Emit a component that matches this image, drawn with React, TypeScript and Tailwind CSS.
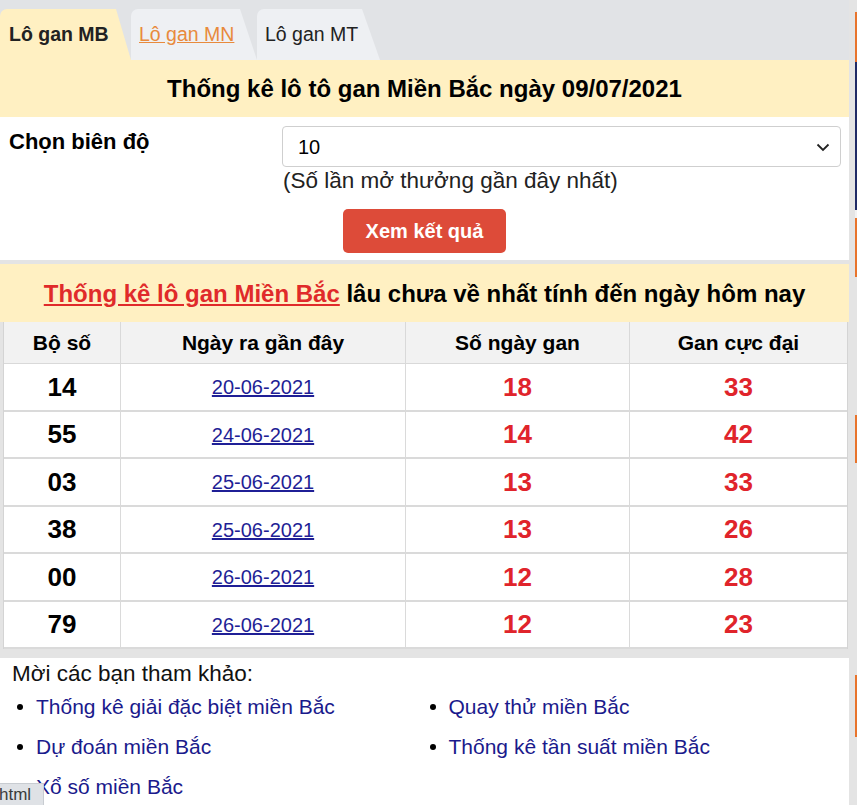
import React from "react";

const rows = [
  { bo: "14", date: "20-06-2021", gan: "18", max: "33" },
  { bo: "55", date: "24-06-2021", gan: "14", max: "42" },
  { bo: "03", date: "25-06-2021", gan: "13", max: "33" },
  { bo: "38", date: "25-06-2021", gan: "13", max: "26" },
  { bo: "00", date: "26-06-2021", gan: "12", max: "28" },
  { bo: "79", date: "26-06-2021", gan: "12", max: "23" },
];

const links = [
  "Thống kê giải đặc biệt miền Bắc",
  "Quay thử miền Bắc",
  "Dự đoán miền Bắc",
  "Thống kê tần suất miền Bắc",
  "Xổ số miền Bắc",
];

export default function App() {
  return (
    <div className="relative flex h-[805px] w-[857px] overflow-hidden bg-[#e4e4e4] font-['Liberation_Sans',Arial,sans-serif] text-black">
      <div className="flex w-[849px] flex-col">
        {/* Tabs */}
        <div className="flex h-[60px] shrink-0 items-end bg-[#e1e3e6] pt-[9px]">
          <div className="flex h-[51px] w-[131px] items-center rounded-tl-[7px] bg-[#fff0c2] pl-[9px] text-[19.5px] font-bold text-[#222] [clip-path:polygon(0_0,calc(100%-15px)_0,100%_100%,0_100%)]">
            Lô gan MB
          </div>
          <div className="flex h-[51px] w-[126px] items-center rounded-tl-[7px] bg-[#eef0f3] pl-[8px] text-[19.5px] text-[#e88a3c] underline [clip-path:polygon(0_0,calc(100%-17px)_0,100%_100%,0_100%)]">
            Lô gan MN
          </div>
          <div className="flex h-[51px] w-[123px] items-center rounded-tl-[7px] bg-[#eef0f3] pl-[8px] text-[19.5px] text-[#222] [clip-path:polygon(0_0,calc(100%-18px)_0,100%_100%,0_100%)]">
            Lô gan MT
          </div>
        </div>

        {/* Title */}
        <div className="flex h-[57px] shrink-0 items-center justify-center bg-[#fff0c2] pt-[1px] text-[24px] font-bold">
          Thống kê lô tô gan Miền Bắc ngày 09/07/2021
        </div>

        {/* Form */}
        <div className="flex h-[143px] shrink-0 flex-col bg-white pt-[9px]">
          <div className="grid grid-cols-[282px_1fr]">
            <div className="pl-[9px] text-[22px] font-bold leading-[32px]">Chọn biên độ</div>
            <div className="pr-[8px]">
              <div className="flex h-[41px] items-center justify-between rounded-[4px] border border-[#cfcfcf] bg-white pl-[15px] pr-[10px] pt-[1px] text-[20px]">
                <span>10</span>
                <svg width="14" height="9" viewBox="0 0 14 9">
                  <polyline points="1.5,1.5 7,7 12.5,1.5" fill="none" stroke="#222" strokeWidth="1.8" />
                </svg>
              </div>
              <div className="mt-[1px] pl-[1px] text-[22.5px] leading-[26px] text-[#222]">
                (Số lần mở thưởng gần đây nhất)
              </div>
            </div>
          </div>
          <div className="mt-[15px] flex justify-center">
            <div className="flex h-[44px] w-[163px] items-center justify-center rounded-[5px] bg-[#dd4b39] text-[20px] font-bold text-white">
              Xem kết quả
            </div>
          </div>
        </div>

        <div className="h-[4px] shrink-0" />

        {/* Red band */}
        <div className="flex h-[58px] shrink-0 items-center justify-center bg-[#fff0c2] pt-[1px] text-[24px] font-bold">
          <span className="text-[#e02a2a] underline">Thống kê lô gan Miền Bắc</span>
          <span>&nbsp;lâu chưa về nhất tính đến ngày hôm nay</span>
        </div>

        {/* Table */}
        <div className="shrink-0 pl-[3px] pr-[1px]">
          <div className="grid grid-cols-[117px_285px_224px_1fr] border-l border-r border-[#d4d4d4]">
            {["Bộ số", "Ngày ra gần đây", "Số ngày gan", "Gan cực đại"].map((h, i) => (
              <div
                key={h}
                className={`flex h-[42px] items-center justify-center border-b border-[#d9d9d9] bg-[#f2f2f2] pt-[1px] text-[21px] font-bold ${i < 3 ? "border-r" : ""}`}
              >
                {h}
              </div>
            ))}
            {rows.map((r, idx) => (
              <React.Fragment key={idx}>
                <div className="flex h-[47.5px] items-center justify-center border-b-2 border-r border-[#dadada] bg-white pt-[1px] text-[26px] font-bold">
                  {r.bo}
                </div>
                <div className="flex h-[47.5px] items-center justify-center border-b-2 border-r border-[#dadada] bg-white pt-[1px] text-[20px] text-[#1f1f96] underline">
                  {r.date}
                </div>
                <div className="flex h-[47.5px] items-center justify-center border-b-2 border-r border-[#dadada] bg-white pt-[1px] text-[26px] font-bold text-[#e0242b]">
                  {r.gan}
                </div>
                <div className="flex h-[47.5px] items-center justify-center border-b-2 border-[#dadada] bg-white pt-[1px] text-[26px] font-bold text-[#e0242b]">
                  {r.max}
                </div>
              </React.Fragment>
            ))}
          </div>
        </div>

        <div className="h-[9px] shrink-0" />

        {/* Bottom links */}
        <div className="flex-1 bg-white pt-[3px]">
          <div className="pl-[12px] text-[22.5px] leading-[26px] text-[#111]">Mời các bạn tham khảo:</div>
          <ul className="grid grid-cols-2 pl-[12px] pr-[12px]">
            {links.map((l) => (
              <li key={l} className="flex h-[40px] items-center">
                <span className="ml-[5px] mr-[13px] h-[6px] w-[6px] rounded-full bg-black" />
                <span className="text-[21px] text-[#1a1a8c]">{l}</span>
              </li>
            ))}
          </ul>
        </div>
      </div>

      {/* Right sidebar sliver */}
      <div className="ml-[6px] flex w-[2px] flex-col">
        <div className="h-[12px]" />
        <div className="h-[50px] bg-[#e8742c]" />
        <div className="h-[148px] bg-[#1f2a66]" />
        <div className="h-[8px] bg-[#f2f2f2]" />
        <div className="h-[59px] bg-[#e8742c]" />
        <div className="h-[138px]" />
        <div className="h-[48px] bg-[#e8742c]" />
        <div className="h-[212px]" />
        <div className="h-[62px] bg-[#e8742c]" />
      </div>

      {/* Status bar overlay */}
      <div className="absolute bottom-0 left-0 flex h-[22px] w-[44px] items-center overflow-hidden border-r border-t border-[#c8ccd1] bg-[#dfe2e6]">
        <span className="ml-[-1px] text-[17px] leading-none text-[#3c3c3c]">html</span>
      </div>
    </div>
  );
}
